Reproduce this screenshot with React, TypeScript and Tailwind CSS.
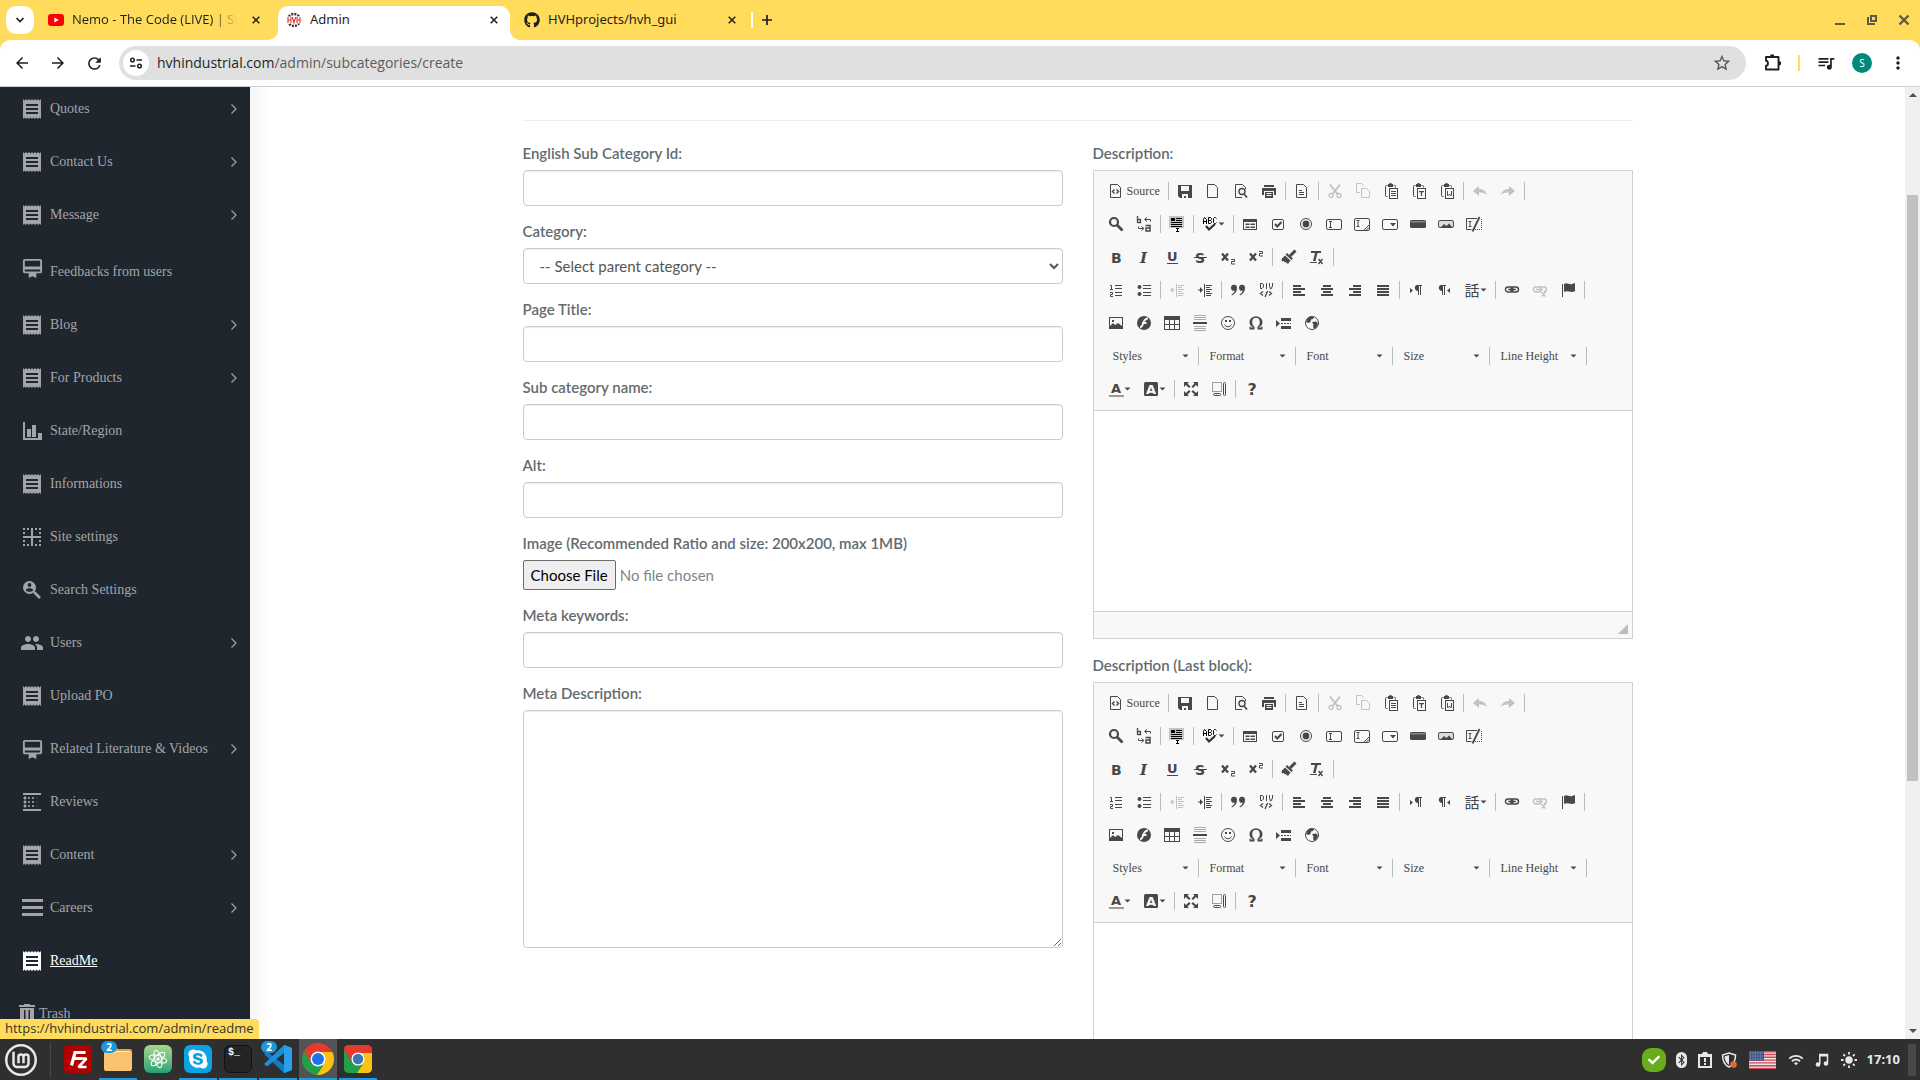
import React from 'react';
import clsx from 'clsx';
import { FaGithub, FaSkype, FaCheck, FaBluetoothB } from 'react-icons/fa';
import { SiLinuxmint } from 'react-icons/si';
import {
  MdArrowBack,
  MdArrowForward,
  MdBlurLinear,
  MdBorderInner,
  MdCardMembership,
  MdMoreVert,
  MdOutlineStarBorder,
  MdPeople,
  MdQueueMusic,
  MdReceipt,
  MdRefresh,
  MdWifi,
} from 'react-icons/md';

/* ---------- Browser chrome ---------- */

function Flare({ side }: { side: 'left' | 'right' }) {
  return (
    <svg
      viewBox="0 0 10 10"
      className={clsx('absolute bottom-0 size-2.5 text-white', side === 'left' ? '-left-2.5' : '-right-2.5')}
    >
      <path fill="currentColor" d={side === 'left' ? 'M10 0v10H0A10 10 0 0 0 10 0z' : 'M0 0v10h10A10 10 0 0 1 0 0z'} />
    </svg>
  );
}

function CloseTab() {
  return (
    <button type="button" aria-label="Close tab" className="flex size-4 shrink-0 items-center justify-center">
      <svg viewBox="0 0 8 8" className="size-2">
        <path d="M.7.7l6.6 6.6M7.3.7L.7 7.3" stroke="#1f1f1f" strokeWidth="1.5" />
      </svg>
    </button>
  );
}

function TabStrip() {
  return (
    <div className="flex h-10 items-end bg-[#ffdc5c] px-1.5 text-[13px] text-[#1f1f1f]">
      <button type="button" aria-label="Search tabs" className="mb-1.5 flex size-7 items-center justify-center rounded-[10px] bg-white">
        <svg viewBox="0 0 10 10" className="size-2.5">
          <path d="M1.5 3L5 6.5 8.5 3" fill="none" stroke="#1f1f1f" strokeWidth="1.7" />
        </svg>
      </button>

      <div className="ml-3.5 flex h-[34px] w-[230px] items-center pb-1.5 pr-3.5">
        <svg viewBox="0 0 16 12" className="h-3 w-4 shrink-0">
          <rect width="16" height="12" rx="3" fill="#f00" />
          <path d="M6.3 3.4v5.2L10.8 6z" fill="#fff" />
        </svg>
        <span className="ml-2 flex-1 overflow-hidden whitespace-nowrap font-['Open_Sans',sans-serif] [mask-image:linear-gradient(to_right,black_84%,transparent)]">
          Nemo - The Code (LIVE) | Swi
        </span>
        <span className="ml-2.5 flex">
          <CloseTab />
        </span>
      </div>

      <div className="relative flex h-[34px] w-[232px] items-center rounded-t-[10px] bg-white pb-1.5 pl-2 pr-2">
        <Flare side="left" />
        <svg viewBox="0 0 16 16" className="size-4">
          <circle cx="8" cy="8" r="6" fill="none" stroke="#333" strokeWidth="2.4" strokeDasharray="2 1.1" />
          <rect x="1" y="4.5" width="14" height="7" fill="#fff" />
          <path d="M2 5v6M5 5v6M2 8h3M6.3 5L8 10.8 9.7 5M11 5v6M14 5v6M11 8h3" fill="none" stroke="#d33" strokeWidth="1.1" />
        </svg>
        <span className="ml-2 flex-1">Admin</span>
        <CloseTab />
        <Flare side="right" />
      </div>

      <div className="flex h-[34px] w-[241px] items-center pb-1.5 pl-3.5 pr-[11px]">
        <FaGithub className="size-4" />
        <span className="ml-2 flex-1">HVHprojects/hvh_gui</span>
        <CloseTab />
      </div>

      <div className="mb-3 h-4 w-0.5 bg-white" />
      <button type="button" aria-label="New tab" className="mb-3.5 ml-2 flex size-3 items-center justify-center">
        <svg viewBox="0 0 12 12" className="size-3">
          <path d="M6 1v10M1 6h10" stroke="#1f1f1f" strokeWidth="1.7" />
        </svg>
      </button>

      <div className="mb-3 ml-auto flex items-center gap-4 pr-0.5">
        <svg viewBox="0 0 16 16" className="size-4">
          <path d="M3 11h10v2H3z" fill="#5f5a48" />
        </svg>
        <svg viewBox="0 0 16 16" className="size-4" fill="none" stroke="#5f5a48" strokeWidth="2">
          <path d="M7 4h5v5H7zM4 5v7h7" />
        </svg>
        <svg viewBox="0 0 16 16" className="size-4">
          <path d="M3.500 3.500l9 9M12.500 3.500l-9 9" stroke="#5f5a48" strokeWidth="2.4" />
        </svg>
      </div>
    </div>
  );
}

function AddressBar() {
  return (
    <div className="bg-[#ffdc5c]">
      <div className="flex h-[47px] items-center rounded-t-[10px] border-b border-[#cfcfcf] bg-white px-3 text-[#1f1f1f]">
        <div className="mr-[15px] flex items-center gap-[18px] pl-px">
          <button type="button" aria-label="Back">
            <MdArrowBack className="size-[18px]" />
          </button>
          <button type="button" aria-label="Forward">
            <MdArrowForward className="size-[18px]" />
          </button>
          <button type="button" aria-label="Reload">
            <MdRefresh className="size-[19px]" />
          </button>
        </div>
        <div className="flex h-[34px] flex-1 items-center rounded-full bg-[#e0e0e0] pl-1 pr-3.5">
          <span className="flex size-[26px] items-center justify-center rounded-full bg-white">
            <svg viewBox="0 0 14 14" className="size-3.5" fill="none" stroke="#1f1f1f" strokeWidth="1.5">
              <circle cx="3.500" cy="4" r="1.800" />
              <path d="M7.500 4H13M1 10h5.500" />
              <circle cx="10.500" cy="10" r="1.800" />
            </svg>
          </span>
          <span className="ml-2 flex-1 font-['Open_Sans',sans-serif] text-sm text-[#5c5c5c]">
            <span className="text-[#1f1f1f]">hvhindustrial.com</span>/admin/subcategories/create
          </span>
          <button type="button" aria-label="Bookmark this tab">
            <MdOutlineStarBorder className="size-5 text-[#555]" />
          </button>
        </div>
        <button type="button" aria-label="Extensions" className="ml-4">
          <svg viewBox="0 0 20 20" className="size-5">
            <path
              d="M4 4h12.500v12.500H4v-3.700c2.600 0 2.600-5.100 0-5.100z"
              fill="none"
              stroke="currentColor"
              strokeWidth="1.900"
              strokeLinejoin="round"
            />
            <path d="M8 3.500a2.200 2.200 0 0 1 4.400 0zM17 8a2.200 2.200 0 0 1 0 4.400z" fill="currentColor" />
          </svg>
        </button>
        <span className="ml-4 h-4 w-0.5 bg-[#ffdc5c]" />
        <button type="button" aria-label="Media controls" className="ml-4">
          <MdQueueMusic className="size-5" />
        </button>
        <span className="ml-4 flex size-5 items-center justify-center rounded-full bg-[#00897b] text-[10px] text-white">S</span>
        <button type="button" aria-label="Menu" className="ml-4">
          <MdMoreVert className="size-5" />
        </button>
      </div>
    </div>
  );
}

/* ---------- Sidebar ---------- */

const chartIcon = (
  <svg viewBox="0 0 24 24" fill="currentColor" className="size-6">
    <path d="M3 3h2v16h17v2H3zM7 10h4v8H7zM12 6h4v12h-4zM18 14h4v5h-4z" />
  </svg>
);

const searchUserIcon = (
  <svg viewBox="0 0 24 24" className="size-6">
    <circle cx="9.500" cy="9.500" r="6.500" fill="currentColor" />
    <path d="M14 14l6 6" stroke="currentColor" strokeWidth="2.600" />
    <circle cx="9.500" cy="7" r="1.900" fill="#20262e" />
    <path d="M5.800 12.200c.8-2.600 6.600-2.600 7.400 0-1.800 2.200-5.600 2.200-7.400 0z" fill="#20262e" />
  </svg>
);

const barsIcon = (
  <svg viewBox="0 0 24 24" fill="currentColor" className="size-6">
    <path d="M2 3h21v3H2zM2 10h21v3H2zM2 17h21v3H2z" />
  </svg>
);

const trashIcon = (
  <svg viewBox="0 0 16 20" fill="currentColor" className="h-5 w-4">
    <path d="M5 1V0h6v1h5v2H0V1zM1 4h14v16H1zm4 2v12h1.500V6zm4.500 0v12H11V6z" fillRule="evenodd" />
  </svg>
);

const receipt = <MdReceipt className="size-6" />;

interface NavItem {
  label: string;
  icon: React.ReactNode;
  arrow?: boolean;
  tall?: boolean;
  active?: boolean;
}

const navItems: NavItem[] = [
  { label: 'Quotes', icon: receipt, arrow: true },
  { label: 'Contact Us', icon: receipt, arrow: true },
  { label: 'Message', icon: receipt, arrow: true },
  { label: 'Feedbacks from users', icon: <MdCardMembership className="size-[23px]" />, tall: true },
  { label: 'Blog', icon: receipt, arrow: true },
  { label: 'For Products', icon: receipt, arrow: true },
  { label: 'State/Region', icon: chartIcon },
  { label: 'Informations', icon: receipt },
  { label: 'Site settings', icon: <MdBorderInner className="size-6" /> },
  { label: 'Search Settings', icon: searchUserIcon },
  { label: 'Users', icon: <MdPeople className="size-6" />, arrow: true },
  { label: 'Upload PO', icon: receipt },
  { label: 'Related Literature & Videos', icon: <MdCardMembership className="size-[23px]" />, arrow: true },
  { label: 'Reviews', icon: <MdBlurLinear className="size-6" /> },
  { label: 'Content', icon: receipt, arrow: true },
  { label: 'Careers', icon: barsIcon, arrow: true },
  { label: 'ReadMe', icon: receipt, active: true },
];

function Sidebar() {
  return (
    <nav className="w-[250px] shrink-0 overflow-hidden bg-[#20262e] pt-3 font-['Liberation_Serif',serif] text-sm leading-5 text-[#a3a5a8]">
      {navItems.map((item) => (
        <a
          key={item.label}
          href="#"
          className={clsx(
            'mb-[33px] flex pl-5 pr-[13px]',
            item.tall ? 'h-6 items-end' : 'h-5 items-center',
            item.active && 'text-white underline'
          )}
        >
          <span className={clsx('flex h-5 w-6 items-center justify-center', item.tall && 'self-start')}>{item.icon}</span>
          <span className="ml-1.5 flex-1 whitespace-nowrap">{item.label}</span>
          {item.arrow && (
            <svg viewBox="0 0 6 10" className="h-2.5 w-1.5">
              <path d="M.5.500L5 5 .5 9.500" fill="none" stroke="currentColor" strokeWidth="1.200" />
            </svg>
          )}
        </a>
      ))}
      <a href="#" className="flex h-5 items-center pl-[19px]">
        {trashIcon}
        <span className="ml-1">Trash</span>
      </a>
    </nav>
  );
}

/* ---------- Rich text editor ---------- */

const letter = "font-['DejaVu_Sans',sans-serif] font-bold";

const clipboard = (
  <>
    <path d="M4.500 2.500h-1q-1 0-1 1v9q0 1 1 1h1M10.500 2.500h1q1 0 1 1v1" fill="none" stroke="currentColor" />
    <path d="M5 1h1.500V0h2v1H10v3H5zM6 5h9v11H6z" fill="currentColor" />
    <path d="M7 6h7v9H7z" fill="#f8f8f8" />
  </>
);

const page = <path d="M2.500 1.500h7l3 3v10h-10z" fill="none" stroke="currentColor" />;

const icons: Record<string, React.ReactNode> = {
  Source: (
    <>
      {page}
      <path d="M6.500 6.500L4.500 8.500l2 2M8.500 6.500l2 2-2 2" fill="none" stroke="currentColor" strokeWidth="1.400" />
    </>
  ),
  Save: <path fillRule="evenodd" d="M1 2h14v13H3l-2-2zm3 1v5h8V3zm1 8v4h2v-2h2v2h2v-4z" />,
  'New Page': page,
  Preview: (
    <g fill="none" stroke="currentColor">
      <path d="M12.500 6V4.500l-3-3h-7v13H9" />
      <circle cx="9" cy="8.500" r="3" strokeWidth="1.400" />
      <path d="M11 11l3 3.500" strokeWidth="1.800" />
    </g>
  ),
  Print: <path fillRule="evenodd" d="M3 2h10v2H3zM1 5h14v7h-2V8H3v4H1zm3 4h8v6H4zm1.500 1v1h5v-1zm0 2v1h5v-1z" />,
  Templates: (
    <>
      {page}
      <path d="M5 7h3v1H5zM5 9h5v1H5zM5 11h5v1H5z" />
    </>
  ),
  Cut: (
    <g fill="none" stroke="currentColor">
      <path d="M3 1.500l7.500 9.500M13 1.500L5.500 11" strokeWidth="2" />
      <circle cx="4" cy="12.500" r="2" strokeWidth="1.300" />
      <circle cx="12" cy="12.500" r="2" strokeWidth="1.300" />
    </g>
  ),
  Copy: (
    <g fill="none" stroke="currentColor">
      <path d="M5 9.500H1.500v-9h5l2 2v1" />
      <path d="M6.500 5.500h5l3 3v6h-8z" />
    </g>
  ),
  Paste: (
    <>
      {clipboard}
      <path d="M8 8h5v1H8zM8 10h5v1H8zM8 12h5v1H8z" />
    </>
  ),
  'Paste as plain text': (
    <>
      {clipboard}
      <path d="M8 8h5v1.200h-1.900V13H9.900V9.200H8z" />
    </>
  ),
  'Paste from Word': (
    <>
      {clipboard}
      <path d="M8.500 8v4.500h1l1-1.500 1 1.500h1V8" fill="none" stroke="currentColor" />
    </>
  ),
  Undo: <path d="M1 8l6-5v3c4 0 7 2 8 6-2-2-4-2.500-8-2.500V13z" />,
  Redo: <path d="M15 8L9 3v3c-4 0-7 2-8 6 2-2 4-2.500 8-2.500V13z" />,
  Find: (
    <g fill="none" stroke="currentColor">
      <circle cx="6" cy="6" r="4" strokeWidth="2.200" />
      <path d="M9 9l5.500 5.500" strokeWidth="2.800" />
    </g>
  ),
  Replace: (
    <g fill="none" stroke="currentColor">
      <path d="M1.500 0v7M1.500 3.500h3v3h-3" strokeWidth="1.300" />
      <path d="M9.500 9.500h4.500v5.500h-4v-3h4" strokeWidth="1.500" />
      <path d="M14.500 5.500v-2H9M11 1.500l-2.500 2 2.500 2M2.500 10.500v2H7M5.500 10.500l2.500 2-2.500 2" />
    </g>
  ),
  'Select All': (
    <>
      <path d="M0 0h15v12H0z" fill="#c4c4c4" />
      <path d="M2 2h4v3H2zM7 2h6v1H7zM7 4h6v1H7zM2 6h11v1H2zM2 8h11v1H2zM2 10h11v1H2zM6 12h1v1h1v2H7v1h3v-1H9v-2h1v-1H6z" fill="#000" />
    </>
  ),
  'Spell Check': (
    <>
      <path
        d="M1.500 8V3.500L2.500 1.500 4.500 3.500V8M1.500 5.500h3M6.500 1.500v6h2l1-1v-1l-1-1h-2 2l1-1v-1l-1-1zM14.500 2.500l-1-1h-1l-1 1v4l1 1h1l1-1"
        fill="none"
        stroke="#000"
      />
      <path d="M4 10l3 3.500L13 8" fill="none" stroke="#333" strokeWidth="2.200" />
    </>
  ),
  Form: <path fillRule="evenodd" d="M1 3h14v11H1zm1 3v7h12V6zm1.500 1.500h4v1.500h-4zm5 0h4.500v1.500H8.500zm-5 3h4V12h-4zm5 0h4.500V12H8.500z" />,
  Checkbox: (
    <g fill="none" stroke="currentColor">
      <rect x="2.500" y="3.500" width="11" height="10" rx="1.500" />
      <path d="M5 8l2.300 2.500L11.500 6" strokeWidth="2" />
    </g>
  ),
  'Radio Button': (
    <>
      <circle cx="8" cy="8" r="5.500" fill="none" stroke="currentColor" />
      <circle cx="8" cy="8" r="3.400" />
    </>
  ),
  'Text Field': (
    <g fill="none" stroke="currentColor">
      <rect x=".5" y="3.500" width="15" height="10" rx="1.500" />
      <path d="M3 5.500h3M3 11.500h3M4.500 5.500v6" />
    </g>
  ),
  Textarea: (
    <g fill="none" stroke="currentColor">
      <rect x=".5" y="2.500" width="15" height="12" rx="1.500" />
      <path d="M2.500 4.500h3M2.500 10.500h3M4 4.500v6M10 14l5-5M12.500 14l2.500-2.500" />
    </g>
  ),
  'Selection Field': (
    <>
      <rect x=".5" y="3.500" width="15" height="10" rx="1.500" fill="none" stroke="currentColor" />
      <path d="M8 7h6l-3 3.500z" />
    </>
  ),
  Button: (
    <>
      <rect x="0" y="4" width="16" height="8" rx="1.500" />
      <path d="M1 5h14v1.500H1z" fill="#888" />
    </>
  ),
  'Image Button': (
    <>
      <rect x=".5" y="4.500" width="15" height="7" rx="1.500" fill="#ddd" stroke="currentColor" />
      <path d="M3 11l3-3 2.500 2 2.500-2.500 3 3.500z" />
    </>
  ),
  'Hidden Field': (
    <>
      <path d="M11 2.500H.5v11h5M2.500 5.500h3M2.500 10.500h3M4 5.500v5" fill="none" stroke="currentColor" />
      <path d="M13.500 1L6.500 15.500" stroke="currentColor" strokeWidth="1.800" />
      <path d="M15.500 3v10.500H9" fill="none" stroke="currentColor" strokeDasharray="1 1" />
    </>
  ),
  Bold: <text x="3" y="13.500" fontSize="14" className={letter}>B</text>,
  Italic: <text x="4" y="13.500" fontSize="15" className="font-['DejaVu_Serif',serif] font-bold italic">I</text>,
  Underline: (
    <>
      <text x="3" y="11.500" fontSize="13" className={letter}>U</text>
      <path d="M3 14h11v1H3z" />
    </>
  ),
  Strikethrough: (
    <>
      <text x="3" y="13.500" fontSize="14" className={letter}>S</text>
      <path d="M2 8h13v1H2z" />
    </>
  ),
  Subscript: (
    <>
      <path d="M2 4.500l6 7M8 4.500l-6 7" stroke="currentColor" strokeWidth="2.300" />
      <path d="M11 10.500h3.500v2h-3v2.500H15" fill="none" stroke="currentColor" />
    </>
  ),
  Superscript: (
    <>
      <path d="M2 4.500l6 7M8 4.500l-6 7" stroke="currentColor" strokeWidth="2.300" />
      <path d="M11 2.500h3.500v2h-3v2.500H15" fill="none" stroke="currentColor" />
    </>
  ),
  'Copy Formatting': (
    <>
      <path d="M14.500 1.500L9 7" stroke="currentColor" strokeWidth="3" />
      <path d="M6 4l6 5.500-1.500 1.500-6-5.500zM4 6.500l5.500 5L7 15 4.500 13l-1 .5L3 12l-2 .5L.5 10z" />
    </>
  ),
  'Remove Format': (
    <>
      <path d="M2 2h10v2H8.500L6.500 12H4l2-8H2z" />
      <path d="M1 13.500h7" stroke="currentColor" />
      <path d="M9.500 10l4 5M13.500 10l-4 5" stroke="currentColor" strokeWidth="1.400" />
    </>
  ),
  'Numbered List': (
    <>
      <path d="M2 3.500h1.500V7M2 7.500h3M2 10.500h2.500v2H2.500v2H5" fill="none" stroke="currentColor" />
      <path d="M7 3h7v1H7zM7 6h7v1H7zM7 10h7v1H7zM7 13h7v1H7z" />
    </>
  ),
  'Bulleted List': (
    <>
      <circle cx="3.500" cy="5" r="2" />
      <circle cx="3.500" cy="12" r="2" />
      <path d="M7 3h8v1H7zM7 6h8v1H7zM7 10h8v1H7zM7 13h8v1H7z" />
    </>
  ),
  Outdent: <path d="M7 2h1v13H7zM9 3h6v1H9zM9 5h4v1H9zM9 7h6v1H9zM9 9h4v1H9zM9 11h6v1H9zM9 13h5v1H9zM1 8l3-3v2.500h2v1H4V11z" />,
  Indent: <path d="M7 2h1v13H7zM9 3h6v1H9zM9 5h4v1H9zM9 7h6v1H9zM9 9h4v1H9zM9 11h6v1H9zM9 13h5v1H9zM6 8L3 5v2.500H1v1h2V11z" />,
  'Block Quote': <path d="M1 6a3 3 0 0 1 6-.5C7.300 9 5.500 11.500 2 13.500l-.5-1C3.500 11.500 4.500 10 4.700 8.700 2.800 9.300 1 8 1 6zM9 6a3 3 0 0 1 6-.5c.3 3.500-1.500 6-5 8l-.5-1c2-1 3-2.500 3.200-3.800C10.800 9.300 9 8 9 6z" />,
  'Create Div': (
    <g fill="none" stroke="currentColor">
      <path d="M2.500 1v5.500H4L5.500 5V2.500L4 1.500H2M8.500 1v6M11.500 1v3L12.500 7h.5L14.500 4V1" />
      <path d="M5 9.500l-2.500 2L5 13.500M11 9.500l2.500 2-2.500 2M9.500 9l-2.500 6" strokeWidth="1.300" />
    </g>
  ),
  'Align Left': <path d="M2 3h8v2H2zM2 6h12v2H2zM2 9h8v2H2zM2 12h12v2H2z" />,
  Center: <path d="M4 3h8v2H4zM2 6h12v2H2zM4 9h8v2H4zM2 12h12v2H2z" />,
  'Align Right': <path d="M6 3h8v2H6zM2 6h12v2H2zM6 9h8v2H6zM2 12h12v2H2z" />,
  Justify: <path d="M2 3h12v2H2zM2 6h12v2H2zM2 9h12v2H2zM2 12h12v2H2z" />,
  'Left to Right': <path d="M2 6l3 2.500L2 11zM8 3h6v1h-1v9h-1V4h-1v9h-1V9C6 9 6 3 9 3z" />,
  'Right to Left': <path d="M14 6l-3 2.500L14 11zM4 3h6v1H9v9H8V4H7v9H6V9C2 9 2 3 5 3z" />,
  Language: <text x=".5" y="13.500" fontSize="15" className="font-['Noto_Sans_CJK_JP',sans-serif]">話</text>,
  Link: (
    <g fill="none" stroke="currentColor" strokeWidth="1.400">
      <rect x="1.500" y="5" width="7.500" height="5" rx="2.500" />
      <rect x="7" y="5" width="7.500" height="5" rx="2.500" />
      <path d="M4 7.500h8" />
    </g>
  ),
  Unlink: (
    <g fill="none" stroke="currentColor" strokeWidth="1.400">
      <rect x="1.500" y="5" width="7.500" height="5" rx="2.500" />
      <path d="M7 5h5q2.500 0 2.500 2.500T12 9M4 7.500h7M9.500 10l4 4.500M13.500 10l-4 4.500" />
    </g>
  ),
  Anchor: <path d="M2 2h1v13H2zM4 2c3-2 5 1 8 0l3-1v8c-4 2.500-7-1-11 1z" />,
  Image: <path fillRule="evenodd" d="M1 2h14v12H1zm1 1v8l3-3 2 2 3-2 4 3V3zm2 2h2v2H4z" />,
  Flash: (
    <>
      <circle cx="8" cy="8" r="7" />
      <path d="M12 3.500C8.500 3.500 8 6 7.200 8.500 6.500 11 5.500 12 4 12.500M6 8h4.500" fill="none" stroke="#f8f8f8" strokeWidth="1.800" />
    </>
  ),
  Table: <path fillRule="evenodd" d="M0 1h16v14H0zm1 4v4h4V5zm5 0v4h4V5zm5 0v4h4V5zM1 10v4h4v-4zm5 0v4h4v-4zm5 0v4h4v-4z" />,
  'Horizontal Line': (
    <>
      <path d="M2 0h12v1H2zM2 2h12v1H2zM2 4h12v1H2zM2 11h12v1H2zM2 13h12v1H2zM2 15h12v1H2z" fill="#aaa" />
      <path d="M1 7h14v2H1z" />
    </>
  ),
  Smiley: (
    <>
      <circle cx="8" cy="8" r="6.500" fill="none" stroke="currentColor" />
      <path d="M5 5h2v2H5zM9 5h2v2H9z" />
      <path d="M4.500 9.500c1.500 3 5.500 3 7 0" fill="none" stroke="currentColor" />
    </>
  ),
  'Special Character': (
    <path d="M1.500 14.500v-3h1l.5 1h2C3 11 1.500 9.500 1.500 7a6.500 5.800 0 0 1 13 0c0 2.500-1.500 4-3.500 5.500h2l.5-1h1v3H9.500V12c1.500-1.200 2.300-2.800 2.300-5 0-2.800-1.500-4.300-3.800-4.300S4.200 4.200 4.200 7c0 2.200.8 3.800 2.300 5v2.500z" />
  ),
  'Page Break': <path d="M0 5l4 3.500L0 12zM5 3h10v3H5zM5 11h10v3H5zM5 8h2v1H5zM8 8h2v1H8zM11 8h2v1h-2zM14 8h1v1h-1z" />,
  IFrame: (
    <>
      <circle cx="8" cy="8" r="6.500" fill="none" stroke="currentColor" />
      <path d="M3 4l3-2.500 4 .5-1 2-2 .5L6.500 7 4.500 8 2 7zM8 7l4-.5 2 2-1 3-2.500 2.500L9 12l.5-2.500z" />
    </>
  ),
  'Text Color': (
    <>
      <text x="3" y="12" fontSize="13" className={letter}>A</text>
      <path d="M1 14h15v2H1z" fill="#999" />
    </>
  ),
  'Background Color': (
    <>
      <rect x="1" y="1" width="14" height="14" rx="1.500" />
      <text x="3" y="13" fontSize="13" fill="#f8f8f8" className={letter}>A</text>
    </>
  ),
  Maximize: (
    <path d="M1 1h5L4.500 2.500l3 3-1.500 1.500-3-3L1 6zM15 1v5l-2-2-3 3L8.500 5.500l3-3L10 1zM1 15v-5l2 2 3-3 1.500 1.500-3 3L6 15zM15 15h-5l1.500-1.500-3-3L10 9l3 3 2-2z" />
  ),
  'Show Blocks': (
    <g fill="none" stroke="currentColor">
      <path d="M1.500 1.500h9v9h-9z" strokeDasharray="1 1" />
      <rect x="12.500" y="1.500" width="2" height="13" rx="1" />
      <rect x="2.500" y="12.500" width="7" height="2" rx="1" />
    </g>
  ),
  About: <text x="3.500" y="14" fontSize="16" className={letter}>?</text>,
};

const disabled = ['Cut', 'Copy', 'Undo', 'Redo', 'Outdent', 'Unlink'];
const withArrow = ['Spell Check', 'Language', 'Text Color', 'Background Color'];

// '|' stands for a separator
const toolbarTop: string[][] = [
  ['Source', '|', 'Save', 'New Page', 'Preview', 'Print', '|', 'Templates', '|', 'Cut', 'Copy', 'Paste', 'Paste as plain text', 'Paste from Word', '|', 'Undo', 'Redo', '|'],
  ['Find', 'Replace', '|', 'Select All', '|', 'Spell Check', '|', 'Form', 'Checkbox', 'Radio Button', 'Text Field', 'Textarea', 'Selection Field', 'Button', 'Image Button', 'Hidden Field'],
  ['Bold', 'Italic', 'Underline', 'Strikethrough', 'Subscript', 'Superscript', '|', 'Copy Formatting', 'Remove Format', '|'],
  ['Numbered List', 'Bulleted List', '|', 'Outdent', 'Indent', '|', 'Block Quote', 'Create Div', '|', 'Align Left', 'Center', 'Align Right', 'Justify', '|', 'Left to Right', 'Right to Left', 'Language', '|', 'Link', 'Unlink', 'Anchor', '|'],
  ['Image', 'Flash', 'Table', 'Horizontal Line', 'Smiley', 'Special Character', 'Page Break', 'IFrame'],
];
const toolbarBottom: string[] = ['Text Color', 'Background Color', '|', 'Maximize', 'Show Blocks', '|', 'About'];
const combos = ['Styles', 'Format', 'Font', 'Size', 'Line Height'];

function Separator() {
  return <span className="mx-0.5 h-[18px] w-px shrink-0 bg-[#bcbcbc]" />;
}

function Caret() {
  return (
    <svg viewBox="0 0 7 4" className="h-1 w-[7px] shrink-0">
      <path d="M.5.500h6L3.500 3.500z" fill="#484848" />
    </svg>
  );
}

function ToolButton({ name }: { name: string }) {
  return (
    <button
      type="button"
      title={name}
      disabled={disabled.includes(name)}
      className="flex h-7 shrink-0 items-center px-1.5 disabled:opacity-30"
    >
      <svg viewBox="0 0 16 16" fill="currentColor" className="size-4 overflow-visible">
        {icons[name]}
      </svg>
      {name === 'Source' && <span className="pl-[3px]">Source</span>}
      {withArrow.includes(name) && <Caret />}
    </button>
  );
}

function ToolRow({ items }: { items: string[] }) {
  return (
    <div className="mb-[5px] flex items-center">
      {items.map((name, i) => (name === '|' ? <Separator key={i} /> : <ToolButton key={name} name={name} />))}
    </div>
  );
}

function Editor({ id, label }: { id: string; label: string }) {
  return (
    <div>
      <label htmlFor={id} className="mb-[7px] block">
        {label}
      </label>
      <div className="border border-[#d1d1d1]">
        <div className="border-b border-[#d1d1d1] bg-[#f8f8f8] px-2 pb-0.5 pt-1.5 font-['Liberation_Serif',serif] text-xs font-normal text-[#484848]">
          {toolbarTop.map((row, i) => (
            <ToolRow key={i} items={row} />
          ))}
          <div className="mb-[5px] flex h-7 items-center pl-0.5">
            {combos.map((name) => (
              <React.Fragment key={name}>
                <button type="button" className="flex h-7 w-[92px] items-center justify-between pl-[9px] pr-[7px]">
                  {name}
                  <Caret />
                </button>
                <Separator />
              </React.Fragment>
            ))}
          </div>
          <ToolRow items={toolbarBottom} />
        </div>
        <textarea id={id} className="block h-[200px] w-full resize-none bg-white p-5 outline-none" />
        <div className="flex h-[27px] items-end justify-end border-t border-[#d1d1d1] bg-[#f8f8f8] p-1">
          <svg viewBox="0 0 10 10" className="size-2.5">
            <path d="M10 0v10H0z" fill="#bcbcbc" />
          </svg>
        </div>
      </div>
    </div>
  );
}

/* ---------- Form ---------- */

const fieldClass =
  'block w-full rounded border border-[#ccc] bg-white px-3 font-normal text-[#555] shadow-[inset_0_1px_1px_rgba(0,0,0,0.075)] outline-none';

function TextField({ id, label }: { id: string; label: string }) {
  return (
    <div>
      <label htmlFor={id} className="mb-[7px] block">
        {label}
      </label>
      <input id={id} type="text" className={clsx(fieldClass, 'h-9')} />
    </div>
  );
}

function SubcategoryForm() {
  return (
    <form className="mx-auto max-w-[1110px] pt-[33px] font-[Lato,sans-serif] text-[15px] font-semibold leading-[19px] text-[#636b6f]">
      <hr className="mb-[23px] border-[#eee]" />
      <div className="grid grid-cols-2 gap-[30px]">
        <div className="flex flex-col gap-4">
          <TextField id="english-id" label="English Sub Category Id:" />
          <div>
            <label htmlFor="category" className="mb-[7px] block">
              Category:
            </label>
            <select id="category" className={clsx(fieldClass, 'h-9')}>
              <option>-- Select parent category --</option>
            </select>
          </div>
          <TextField id="page-title" label="Page Title:" />
          <TextField id="name" label="Sub category name:" />
          <TextField id="alt" label="Alt:" />
          <div>
            <label htmlFor="image" className="mb-[7px] block">
              Image (Recommended Ratio and size: 200x200, max 1MB)
            </label>
            <input
              id="image"
              type="file"
              className="block h-[30px] w-full font-normal text-[#808589] file:mr-1 file:h-[30px] file:rounded-xs file:border file:border-solid file:border-[#6b6b6b] file:bg-[#efefef] file:px-[7px] file:text-black"
            />
          </div>
          <TextField id="keywords" label="Meta keywords:" />
          <div>
            <label htmlFor="meta-description" className="mb-[7px] block">
              Meta Description:
            </label>
            <textarea id="meta-description" className={clsx(fieldClass, 'h-[238px] resize')} />
          </div>
        </div>
        <div className="flex flex-col gap-[17px]">
          <Editor id="description" label="Description:" />
          <Editor id="description-last" label="Description (Last block):" />
        </div>
      </div>
    </form>
  );
}

function Scrollbar() {
  return (
    <div className="flex w-[15px] shrink-0 flex-col items-center bg-[#f0f0f0] py-1.5">
      <svg viewBox="0 0 8 4" className="h-1 w-2">
        <path d="M4 0l4 4H0z" fill="#505050" />
      </svg>
      <div className="mt-[98px] h-[586px] w-[11px] bg-[#c1c1c1]" />
      <svg viewBox="0 0 8 4" className="mt-auto h-1 w-2">
        <path d="M4 4l4-4H0z" fill="#505050" />
      </svg>
    </div>
  );
}

/* ---------- Desktop panel ---------- */

function ChromeLogo({ app }: { app?: boolean }) {
  return (
    <svg viewBox="0 0 32 32" className={app ? 'size-7' : 'size-8'}>
      <clipPath id={app ? 'chrome-square' : 'chrome-round'}>
        {app ? <rect width="32" height="32" rx="5" /> : <circle cx="16" cy="16" r="16" />}
      </clipPath>
      <g clipPath={app ? 'url(#chrome-square)' : 'url(#chrome-round)'}>
        <path d="M0 0h32v9H16L9 20 0 5z" fill="#e33b2e" />
        <path d="M32 9H16l6 11-8 12h18z" fill="#fbc116" />
        <path d="M0 5l9.500 15L16 23h5l-6 9H0z" fill="#249f49" />
      </g>
      <circle cx="16" cy="16" r="7.500" fill="#fff" />
      <circle cx="16" cy="16" r="6" fill={app ? '#3a78b5' : '#1a73e8'} />
    </svg>
  );
}

interface PanelApp {
  name: string;
  icon: React.ReactNode;
  running?: boolean;
  focused?: boolean;
  badge?: string;
}

const apps: PanelApp[] = [
  {
    name: 'FileZilla',
    icon: (
      <svg viewBox="0 0 28 28" className="size-7">
        <rect width="28" height="28" rx="4" fill="#b00000" />
        <path d="M7.500 20.500L11 7.500h10.500M9.500 13.500h8" fill="none" stroke="#fff" strokeWidth="3.200" />
        <path d="M14 13.500h8.500L14.500 22h8" fill="none" stroke="#fff" strokeWidth="2.600" strokeLinejoin="bevel" />
      </svg>
    ),
  },
  {
    name: 'Files',
    running: true,
    badge: '2',
    icon: (
      <svg viewBox="0 0 28 24" className="h-6 w-7">
        <path d="M0 2q0-2 2-2h10l2 2h12q2 0 2 2v4H0z" fill="#dba24a" />
        <path d="M2 4h24v4H2z" fill="#eee" />
        <path d="M0 6h10l2-1h16v17q0 2-2 2H2q-2 0-2-2z" fill="#f9c270" />
      </svg>
    ),
  },
  {
    name: 'Atom',
    icon: (
      <span className="flex size-7 items-center justify-center rounded-md bg-linear-to-b from-[#a5d88c] to-[#1aa376]">
        <svg viewBox="0 0 20 20" className="size-5" fill="none" stroke="#fff" strokeWidth="1.100">
          <ellipse cx="10" cy="10" rx="9" ry="3.400" transform="rotate(15 10 10)" />
          <ellipse cx="10" cy="10" rx="9" ry="3.400" transform="rotate(75 10 10)" />
          <ellipse cx="10" cy="10" rx="9" ry="3.400" transform="rotate(135 10 10)" />
          <circle cx="10" cy="10" r="1.300" fill="#fff" />
        </svg>
      </span>
    ),
  },
  {
    name: 'Skype',
    running: true,
    icon: (
      <span className="flex size-7 items-center justify-center rounded-md bg-[#0ba3e4]">
        <FaSkype className="size-[22px] text-white" />
      </span>
    ),
  },
  {
    name: 'Terminal',
    running: true,
    icon: (
      <span className="flex size-7 items-start rounded-md border border-[#111] bg-[#242424] pl-[3px] pt-0.5 font-['Liberation_Mono',monospace] text-[10px] font-bold leading-none text-white">
        $_
      </span>
    ),
  },
  {
    name: 'Visual Studio Code',
    running: true,
    badge: '2',
    icon: (
      <svg viewBox="0 0 28 28" className="size-7">
        <path d="M20 0l8 3v22l-8 3L0 9l3-2.500L20 20z" fill="#0f7cc4" />
        <path d="M20 0v8L3 21.500 0 19z" fill="#1c8ed6" />
        <path d="M20 0l8 3v22l-8 3z" fill="#2ba0ea" />
      </svg>
    ),
  },
  { name: 'Google Chrome', running: true, focused: true, icon: <ChromeLogo /> },
  { name: 'Chrome app', running: true, icon: <ChromeLogo app /> },
];

function UsFlag() {
  return (
    <svg viewBox="0 0 27 18" className="h-[18px] w-[27px]">
      <path d="M0 0h27v18H0z" fill="#f0e4e4" />
      <path d="M0 .7h27M0 3.500h27M0 6.300h27M0 9.100h27M0 11.900h27M0 14.700h27M0 17.400h27" stroke="#cf4754" strokeWidth="1.400" />
      <path d="M0 0h15v9.800H0z" fill="#46588c" />
      <path d="M1 2h13M1 5h13M1 8h13" stroke="#aab4d0" strokeDasharray="1 1.500" />
    </svg>
  );
}

function Panel() {
  return (
    <footer className="flex h-[41px] shrink-0 items-center bg-[#2f2f2f] text-[#e8e8e8]">
      <button type="button" aria-label="Menu" className="ml-[5px]">
        <SiLinuxmint className="size-8" />
      </button>
      <span className="ml-[13px] h-9 w-px bg-[#484848]" />
      <div className="ml-2 flex gap-0.5 self-stretch">
        {apps.map((app) => (
          <button
            key={app.name}
            type="button"
            title={app.name}
            className={clsx(
              'relative flex w-[38px] items-center justify-center border-b-2',
              app.running ? 'border-[#1e9be0]' : 'border-transparent',
              app.focused && 'bg-[#535353]'
            )}
          >
            {app.icon}
            {app.badge && (
              <span className="absolute left-0.5 top-0.5 flex h-3 w-4 items-center justify-center rounded-full bg-[#1e95d8] text-[10px] font-bold text-white">
                {app.badge}
              </span>
            )}
          </button>
        ))}
      </div>

      <div className="ml-auto flex items-center pr-1">
        <span className="flex size-6 items-center justify-center rounded-[9px] bg-[#68ad1b]">
          <FaCheck className="size-3 text-white" />
        </span>
        <span className="ml-2.5 flex h-4 w-[11px] items-center justify-center rounded-full bg-[#e8e8e8]">
          <FaBluetoothB className="size-3 text-[#2f2f2f]" />
        </span>
        <svg viewBox="0 0 14 16" className="ml-[11px] h-4 w-3.5">
          <path fill="currentColor" fillRule="evenodd" d="M0 2h4l1-2h4l1 2h4v14H0zm2 3v9h10V5zm4 1h2v4H6zm0 5h2v2H6z" />
        </svg>
        <svg viewBox="0 0 16 16" className="ml-[9px] size-4">
          <path d="M8 1l6.500 2c0 6-2 10-6.500 12C3.500 13 1.500 9 1.500 3z" fill="none" stroke="currentColor" strokeWidth="1.500" />
          <path d="M8 3v10c-3-2-4.500-5-4.500-8.500z" fill="currentColor" />
          <circle cx="12.500" cy="12.500" r="3.300" fill="#e26a35" />
        </svg>
        <span className="ml-3">
          <UsFlag />
        </span>
        <MdWifi className="ml-3 size-4" />
        <svg viewBox="0 0 14 14" className="ml-[11px] size-3.5">
          <path d="M4.800 11V1.500h7.700v8" fill="none" stroke="currentColor" strokeWidth="1.500" />
          <path d="M4 1h9v2.500H4z" fill="currentColor" />
          <circle cx="3" cy="11.500" r="2.300" fill="currentColor" />
          <circle cx="11" cy="10.500" r="2.300" fill="currentColor" />
        </svg>
        <svg viewBox="0 0 16 16" className="ml-3 size-4" stroke="currentColor" strokeWidth="1.800">
          <circle cx="8" cy="8" r="3.700" fill="currentColor" stroke="none" />
          <path d="M8 0v2.500M8 13.500V16M0 8h2.500M13.500 8H16M2.300 2.300l1.700 1.700M12 12l1.700 1.700M13.700 2.300L12 4M4 12l-1.700 1.700" />
        </svg>
        <span className="ml-2.5 text-[13px] font-bold">17:10</span>
        <span className="ml-2 h-8 w-2 bg-[#484848]" />
      </div>
    </footer>
  );
}

export default function App() {
  return (
    <div className="flex h-screen flex-col overflow-hidden bg-white font-['Noto_Sans',sans-serif]">
      <TabStrip />
      <AddressBar />
      <div className="relative flex min-h-0 flex-1">
        <Sidebar />
        <main className="flex-1 overflow-hidden bg-linear-to-r from-[#f6f6f6] to-white to-[20px] px-4">
          <SubcategoryForm />
        </main>
        <Scrollbar />
        <div className="absolute bottom-0 left-0 flex h-5 items-center rounded-tr bg-[#ffdc5c] px-[5px] font-['Open_Sans',sans-serif] text-[13px] text-[#333]">
          https://hvhindustrial.com/admin/readme
        </div>
      </div>
      <Panel />
    </div>
  );
}
